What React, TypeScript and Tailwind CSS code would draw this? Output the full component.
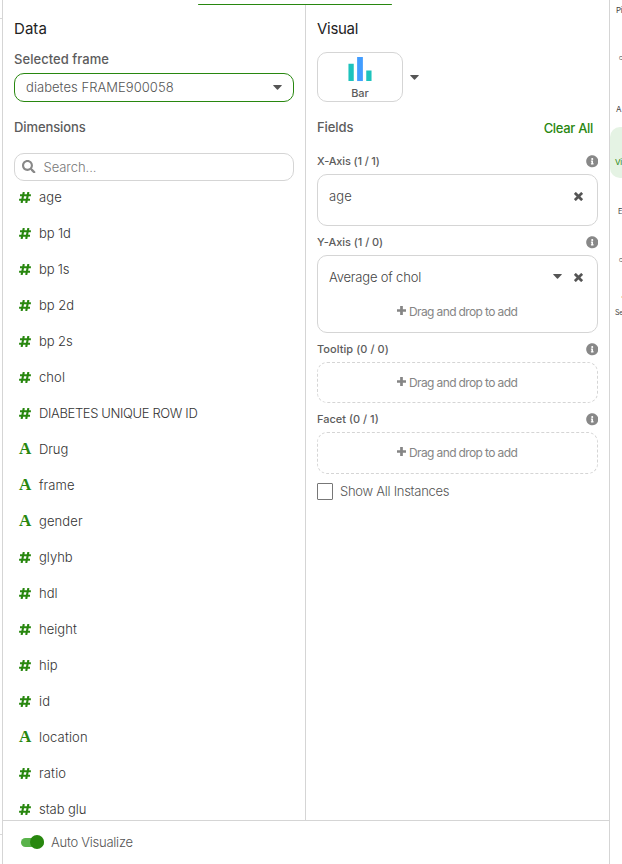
import React from 'react';
import { FaSearch, FaInfoCircle } from 'react-icons/fa';

const dimensions: { name: string; text?: boolean; track: string }[] = [
  { name: 'age', track: 'tracking-[0.2px]' },
  { name: 'bp 1d', track: 'tracking-[-0.1px]' },
  { name: 'bp 1s', track: 'tracking-[-0.2px]' },
  { name: 'bp 2d', track: 'tracking-[0px]' },
  { name: 'bp 2s', track: 'tracking-[-0.1px]' },
  { name: 'chol', track: 'tracking-[0.1px]' },
  { name: 'DIABETES UNIQUE ROW ID', track: 'tracking-[-0.36px]' },
  { name: 'Drug', text: true, track: 'tracking-[-0.1px]' },
  { name: 'frame', text: true, track: 'tracking-[0.1px]' },
  { name: 'gender', text: true, track: 'tracking-[0.1px]' },
  { name: 'glyhb', track: 'tracking-[0px]' },
  { name: 'hdl', track: 'tracking-[0px]' },
  { name: 'height', track: 'tracking-[0.05px]' },
  { name: 'hip', track: 'tracking-[0px]' },
  { name: 'id', track: 'tracking-[0.1px]' },
  { name: 'location', text: true, track: 'tracking-[0.15px]' },
  { name: 'ratio', track: 'tracking-[0.15px]' },
  { name: 'stab glu', track: 'tracking-[-0.05px]' },
];

function Caret() {
  return (
    <svg className="h-[5px] w-[9px] shrink-0" viewBox="0 0 9 5">
      <path d="M.6 0h7.8q.7.1.2.7L5 4.5q-.5.5-1 0L.4.7Q-.1.1.6 0Z" fill="#555" />
    </svg>
  );
}

function Cross() {
  return (
    <svg className="size-[9px] shrink-0" viewBox="0 0 9 9">
      <path d="M1.8 1.8 7.2 7.2M7.2 1.8 1.8 7.2" stroke="#555" strokeWidth="2.7" strokeLinecap="square" />
    </svg>
  );
}

function Drop() {
  return (
    <div className="flex h-4 items-center justify-center gap-[3px] text-[12px] leading-4 tracking-[-0.62px] text-[#858585]">
      <svg className="mb-[3px] size-[9px]" viewBox="0 0 9 9">
        <path d="M4.5 0v9M0 4.5h9" stroke="#858585" strokeWidth="2.7" />
      </svg>
      <span className="w-[109px] whitespace-nowrap">Drag and drop to add</span>
    </div>
  );
}

function Label({ children, track }: { children: React.ReactNode; track: string }) {
  return (
    <div className="flex h-4 items-center justify-between">
      <span className={`text-[11px] leading-4 font-medium text-[#5c5c5c] ${track}`}>{children}</span>
      <FaInfoCircle className="mt-px size-[12.5px] text-[#888]" />
    </div>
  );
}

export default function App() {
  return (
    <div className="flex h-[864px] w-[622px] overflow-hidden bg-white font-['Inter','Noto_Sans',sans-serif] text-[13px] text-[#444]">
      <div className="flex w-0.5 shrink-0 flex-col pt-[18px] pb-[29px]">
        <div className="flex-1 border-y border-[#d8d8d8]" />
      </div>
      <main className="flex w-[608px] shrink-0 flex-col border-x border-[#d5d5d5]">
        <div className="flex h-[5px] shrink-0 items-end pl-[195px]">
          <div className="h-[1.3px] w-[194px] rounded bg-[#28870f]" />
        </div>
        <div className="flex h-[815px] shrink-0">
          <section className="flex w-[303px] shrink-0 flex-col border-r border-[#d5d5d5] px-[11px]">
            <h1 className="mt-[14px] h-5 shrink-0 text-[15px] leading-5 tracking-[0.05px] text-[#222]">Data</h1>
            <div className="mt-[11px] h-[18px] shrink-0 text-[13px] leading-[18px] font-medium tracking-[0.05px] text-[#5c5c5c]">Selected frame</div>
            <div className="mt-[5px] flex h-[29px] shrink-0 items-center justify-between rounded-[10px] border border-[#28870f] px-[11px] text-[13px] font-light tracking-[0.05px] text-[#555]">
              <span>diabetes FRAME900058</span>
              <Caret />
            </div>
            <div className="mt-[16px] h-[18px] shrink-0 text-[13px] leading-[18px] font-medium tracking-[-0.1px] text-[#5c5c5c]">Dimensions</div>
            <div className="mt-[17px] flex h-7 shrink-0 items-center gap-[8px] rounded-[10px] border border-[#d5d5d5] pl-[7px] text-[13px] font-light tracking-[-0.05px] text-[#777]">
              <FaSearch className="mb-px size-[13.5px] text-[#888]" />
              <span className="mt-0.5">Search...</span>
            </div>
            <ul className="-mt-0.5 h-[641px] shrink-0 overflow-hidden">
              {dimensions.map((d) => (
                <li key={d.name} className="flex h-9 items-center pl-1">
                  {d.text ? (
                    <span className="w-[21px] pl-[1px] font-['Liberation_Serif',serif] text-[17px] leading-[18px] font-bold text-[#28870f]">A</span>
                  ) : (
                    <span className="flex w-[21px] pl-px">
                      <svg className="h-[11px] w-3" viewBox="0 0 12 11">
                        <path d="M4.8 0 2.6 11M9.4 0 7.2 11M1 3.3h10.9M.1 7.7H11" fill="none" stroke="#28870f" strokeWidth="2.1" />
                      </svg>
                    </span>
                  )}
                  <span className={`text-[13px] leading-[18px] font-light whitespace-nowrap text-[#333] ${d.track}`}>{d.name}</span>
                </li>
              ))}
            </ul>
          </section>
          <section className="flex w-[303px] shrink-0 flex-col px-[11px]">
            <h1 className="mt-[14px] h-5 text-[15px] leading-5 tracking-[-0.3px] text-[#222]">Visual</h1>
            <div className="mt-[13px] flex items-center gap-[7px]">
              <div className="flex h-[50px] w-[86px] flex-col items-center rounded-[10px] border border-[#d5d5d5] pt-1">
                <svg className="h-[26px] w-6" viewBox="0 0 24 26">
                  <path d="M0 7h5.5v18H0ZM18.5 14H24v11h-5.5Z" fill="#1dc3bd" />
                  <path d="M9 0h6v25H9Z" fill="#429dff" />
                </svg>
                <span className="mt-[3px] text-[11px] leading-4 font-medium text-[#5c5c5c]">Bar</span>
              </div>
              <Caret />
            </div>
            <div className="mt-[16px] flex h-[18px] items-center justify-between pr-[5px] leading-[18px] font-medium">
              <span className="tracking-[-0.1px] text-[#5c5c5c]">Fields</span>
              <span className="mt-0.5 tracking-[-0.32px] text-[#28870f]">Clear All</span>
            </div>
            <div className="mt-[17px]"><Label track="tracking-[-0.15px]">X-Axis (1 / 1)</Label></div>
            <div className="mt-[5px] flex h-[52px] items-start justify-between rounded-[10px] border border-[#d5d5d5] pt-[12px] pr-[14px] pl-[11px]">
              <span className="leading-[18px] font-light tracking-[0.2px]">age</span>
              <span className="mt-[5px]"><Cross /></span>
            </div>
            <div className="mt-[8px]"><Label track="tracking-[-0.05px]">Y-Axis (1 / 0)</Label></div>
            <div className="mt-[5px] h-[78px] rounded-[10px] border border-[#d5d5d5] pt-[13px]">
              <div className="flex h-[18px] items-center pr-[14px] pl-[11px]">
                <span className="flex-1 font-light tracking-[-0.18px]">Average of chol</span>
                <span className="mb-[3px] flex"><Caret /></span>
                <span className="mb-px ml-3 flex"><Cross /></span>
              </div>
              <div className="mt-[17px]"><Drop /></div>
            </div>
            <div className="mt-[8px]"><Label track="tracking-[0.05px]">Tooltip (0 / 0)</Label></div>
            <div className="mt-[5px] h-[41px] rounded-[10px] border border-dashed border-[#d5d5d5] pt-[12px]"><Drop /></div>
            <div className="mt-[8px]"><Label track="tracking-[0px]">Facet (0 / 1)</Label></div>
            <div className="mt-[5px] h-[42px] rounded-[10px] border border-dashed border-[#d5d5d5] pt-[12px]"><Drop /></div>
            <div className="mt-[9px] flex h-[17px] items-center gap-[7px]">
              <div className="h-[17px] w-4 rounded-[1px] border border-[#777]" />
              <span className="font-light tracking-[-0.27px] text-[#555]">Show All Instances</span>
            </div>
          </section>
        </div>
        <footer className="flex h-11 shrink-0 items-center gap-[7px] border-t border-[#d5d5d5] pb-px pl-[18px]">
          <div className="flex h-[9px] w-[23px] items-center justify-end rounded-full bg-[#5ab34b]">
            <span className="size-[14px] shrink-0 rounded-full bg-[#28870f]" />
          </div>
          <span className="leading-[18px] font-light tracking-[-0.25px] text-[#555]">Auto Visualize</span>
        </footer>
      </main>
      <aside className="flex w-[12px] shrink-0 flex-col overflow-hidden text-[8px] leading-[10px] tracking-[-0.3px] whitespace-nowrap text-[#444]">
        <span className="mt-[5px] h-[10px] pl-[6px]">Pi</span>
        <span className="mt-[38px] h-[10px] pl-[9px] text-[5px]">C</span>
        <span className="mt-[41px] h-[10px] pl-[6px]">A</span>
        <div className="mt-[13px] h-[51px] w-10 rounded-[10px] bg-[#e5f3e4] pt-[30px] pl-[5px] text-[#28870f]">Vi</div>
        <span className="mt-[29px] h-[10px] pl-[8px] text-[7.5px]">E</span>
        <span className="mt-[38px] h-[10px] pl-[9px] text-[5px]">C</span>
        <span className="mt-[31px] ml-[11px] h-[2px] w-px bg-[#f8dfb8]" />
        <span className="mt-[10px] h-[10px] pl-[5px] text-[7px]">Se</span>
      </aside>
    </div>
  );
}
